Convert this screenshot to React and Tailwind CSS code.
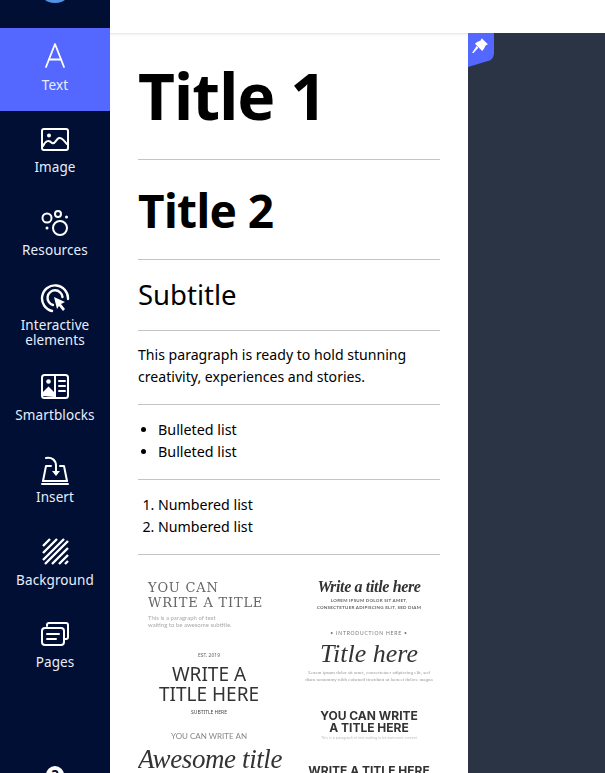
const Svg = ({ children, w = 30, h = 30 }) => (
  <svg width={w} height={h} viewBox="0 0 30 30" fill="none" stroke="white" strokeWidth="2" strokeLinecap="round" strokeLinejoin="round">{children}</svg>
);

const icons = {
  text: <Svg><path d="M6 25 L15 2 L24 25" strokeWidth="1.8" /><path d="M9 17.5 H21" strokeWidth="1.8" /></Svg>,
  image: (
    <Svg>
      <rect x="2" y="4" width="26" height="21" rx="2" />
      <circle cx="9" cy="10.5" r="2" fill="white" stroke="none" />
      <path d="M3 21 C6 15 9 15 12 18 C15 20 16 14 19 13 C22 12 24 16 27 19" />
    </Svg>
  ),
  resources: (
    <Svg>
      <circle cx="7" cy="10" r="4.5" />
      <circle cx="18" cy="6" r="3" />
      <circle cx="20" cy="20" r="7" />
      <circle cx="26.5" cy="9" r="1.5" fill="white" stroke="none" />
      <circle cx="7" cy="20" r="1.5" fill="white" stroke="none" />
    </Svg>
  ),
  interactive: (
    <Svg>
      <path d="M12 27 A13 13 0 1 1 28 15" strokeWidth="2.4" />
      <path d="M13 21 A7.5 7.5 0 1 1 22.5 13" strokeWidth="2.4" />
      <path d="M14 13 L25 18 L21 20 L25 25 L23 27 L19 22 L17 25 Z" fill="white" stroke="none" />
    </Svg>
  ),
  smart: (
    <Svg>
      <rect x="2" y="3" width="26" height="23" rx="2.5" />
      <path d="M15 3 V26" />
      <circle cx="8.5" cy="9.5" r="2.3" fill="white" stroke="none" />
      <path d="M3 24 L3 20 L8.5 14.5 L14 20 L14 25 Z" fill="white" stroke="none" />
      <path d="M19 9 H25 M19 14 H25 M19 19 H25" />
    </Svg>
  ),
  insert: (
    <Svg>
      <path d="M3 26 L6 11 H11 M20 11 H24 L27 26" />
      <path d="M3 26 H27" />
      <path d="M2 29 H28" />
      <path d="M6 3 C12 2 16 5 16 11 V18" />
      <path d="M12 16 H20 L16 21 Z" fill="white" stroke="none" />
    </Svg>
  ),
  background: (
    <Svg>
      <path d="M3 10 L10 3 M3 17 L17 3 M3 24 L24 3 M5 28 L28 5 M12 28 L28 12 M19 28 L28 19 M25 28 L28 25" strokeWidth="2.4" strokeLinecap="butt" />
    </Svg>
  ),
  pages: (
    <Svg>
      <path d="M7 7 V6 C7 4.5 8 4 9 4 H26 C27 4 28 5 28 6 V18 C28 19.5 27 20 26 20 H25" />
      <rect x="2" y="9" width="22" height="17" rx="3" />
      <path d="M7 15 H19 M7 20 H16" />
    </Svg>
  ),
};

const items = [
  { key: "text", label: ["Text"], active: true, cls: "h-[83px] pt-[14px]", lab: "mt-[6px]" },
  { key: "image", label: ["Image"], cls: "h-[82px] pt-[14px]", lab: "mt-[5px]" },
  { key: "resources", label: ["Resources"], cls: "h-[83px] pt-[15px]", lab: "mt-[5px]" },
  { key: "interactive", label: ["Interactive", "elements"], cls: "h-[83px] pt-[8px]", lab: "mt-[4px]" },
  { key: "smart", label: ["Smartblocks"], cls: "h-[82px] pt-[13px]", lab: "mt-[6px]" },
  { key: "insert", label: ["Insert"], cls: "h-[83px] pt-[14px]", lab: "mt-[5px]" },
  { key: "background", label: ["Background"], cls: "h-[82px] pt-[12px]", lab: "mt-[7px]" },
  { key: "pages", label: ["Pages"], cls: "h-[82px] pt-[13px]", lab: "mt-[6px]" },
];

const Sidebar = () => (
  <aside className="w-[110px] h-[773px] shrink-0 bg-[#000f33] overflow-hidden flex flex-col items-stretch text-[#e8eefc]">
    <div className="self-center w-[36px] h-[36px] rounded-full bg-[#4f94e6] -mt-[33px] mb-[25px] shrink-0" />
    {items.map((it) => (
      <div key={it.key} className={`${it.cls} shrink-0 flex flex-col items-center ${it.active ? "bg-[#5468ff]" : ""}`}>
        <div className="h-[30px] flex items-center justify-center">{icons[it.key]}</div>
        <div className={`${it.lab} text-center text-[13.5px] leading-[15px] tracking-[0.1px]`}>
          {it.label.map((l) => <div key={l}>{l}</div>)}
        </div>
      </div>
    ))}
    <div className="self-center mt-[78px] w-[18px] h-[18px] rounded-full bg-white text-[#000f33] text-[14px] font-bold leading-[18px] text-center shrink-0">?</div>
  </aside>
);

const Hr = () => <div className="h-px bg-[#c4c4c4]" />;

const Thumbs = () => (
  <div className="grid grid-cols-2 gap-x-[18px] overflow-hidden h-[218px] blur-[0.4px] text-[#333]">
    <div className="flex flex-col">
      <div className="pl-[10px] pt-[25px] h-[95px] shrink-0" style={{ fontFamily: '"DejaVu Serif", serif' }}>
        <div className="text-[13px] leading-[15px] text-[#666] tracking-[0.8px] whitespace-nowrap">YOU CAN</div>
        <div className="text-[13px] leading-[15px] text-[#666] tracking-[0.8px] whitespace-nowrap">WRITE A TITLE</div>
        <div className="mt-[4px] text-[6px] leading-[7px] text-[#aaa] font-['Lato',sans-serif] whitespace-nowrap">This is a paragraph of text<br />waiting to be awesome subtitle.</div>
      </div>
      <div className="text-center h-[81px] shrink-0 pt-[2px] font-['Noto_Sans',sans-serif]">
        <div className="text-[5px] leading-[6px] text-[#666]">EST. 2019</div>
        <div className="text-[19px] leading-[20px] mt-[6px] text-[#333]">WRITE A<br />TITLE HERE</div>
        <div className="text-[5px] leading-[8px] mt-[4px] text-[#444]">SUBTITLE HERE</div>
      </div>
      <div className="text-center">
        <div className="text-[8px] leading-[10px] text-[#888] font-['Lato',sans-serif]">YOU CAN WRITE AN</div>
        <div className="mt-[2px] text-[27px] leading-[32px] tracking-[-0.4px] italic text-[#333] whitespace-nowrap font-['Liberation_Serif',serif]">Awesome title</div>
      </div>
    </div>
    <div className="flex flex-col">
      <div className="text-center h-[75px] shrink-0 pt-[22px]">
        <div className="text-[16px] leading-[20px] tracking-[-0.35px] italic font-bold text-[#333] font-['Liberation_Serif',serif]">Write a title here</div>
        <div className="text-[4.5px] leading-[7px] tracking-[0.25px] text-[#666] font-['Lato',sans-serif] font-bold whitespace-nowrap">LOREM IPSUM DOLOR SIT AMET,<br />CONSECTETUER ADIPISCING ELIT, SED DIAM</div>
      </div>
      <div className="text-center h-[80px] shrink-0">
        <div className="text-[5px] leading-[6px] tracking-[0.8px] text-[#777] font-['Lato',sans-serif]">• INTRODUCTION HERE •</div>
        <div className="mt-[3px] text-[26px] leading-[30px] italic text-[#333] font-['Liberation_Serif',serif]">Title here</div>
        <div className="text-[5px] leading-[7px] text-[#999] whitespace-nowrap font-['Liberation_Serif',serif]">Lorem ipsum dolor sit amet, consectetuer adipiscing elit, sed<br />diam nonummy nibh euismod tincidunt ut laoreet dolore magna</div>
      </div>
      <div className="text-center h-[55px] shrink-0 font-['Inter',sans-serif] font-bold">
        <div className="text-[12px] leading-[12px] text-[#333]">YOU CAN WRITE<br />A TITLE HERE</div>
        <div className="text-[3.5px] leading-[8px] font-normal text-[#bbb]">This is a paragraph of text waiting to be awesome content</div>
      </div>
      <div className="text-center text-[12px] leading-[12px] font-['Inter',sans-serif] font-bold text-[#333] whitespace-nowrap">WRITE A TITLE HERE</div>
    </div>
  </div>
);

export default function App() {
  return (
    <div className="w-[605px] h-[773px] overflow-hidden flex bg-[#2b3445] font-['Noto_Sans',sans-serif]">
      <Sidebar />
      <div className="flex-1 flex flex-col min-w-0">
        <div className="h-[33px] bg-white shrink-0" />
        <div className="flex-1 flex min-h-0">
          <div className="relative w-[358px] bg-white px-[28px] text-black shadow-[inset_0_3px_3px_-2px_rgba(0,0,0,0.12)]">
            <h1 className="text-[64px] leading-[82px] font-bold pt-[22px] h-[126px] tracking-[-0.9px] whitespace-nowrap">Title 1</h1>
            <Hr />
            <h2 className="text-[46px] leading-[60px] font-bold pt-[20px] h-[99px] tracking-[-0.6px]">Title 2</h2>
            <Hr />
            <h3 className="text-[27.5px] leading-[36px] pt-[17px] h-[70px]">Subtitle</h3>
            <Hr />
            <p className="text-[14.1px] leading-[22px] pt-[13px] h-[73px]">This paragraph is ready to hold stunning creativity, experiences and stories.</p>
            <Hr />
            <ul className="list-disc pl-[20px] text-[14.3px] leading-[22px] pt-[14px] h-[74px]">
              <li>Bulleted list</li>
              <li>Bulleted list</li>
            </ul>
            <Hr />
            <ol className="list-decimal pl-[20px] text-[14.2px] leading-[22px] pt-[14px] h-[74px]">
              <li>Numbered list</li>
              <li>Numbered list</li>
            </ol>
            <Hr />
            <Thumbs />
            <div className="absolute top-0 left-full w-[26px] h-[34px] bg-[#5468ff] flex items-start justify-center" style={{ clipPath: "polygon(0 0,100% 0,100% 62%,96% 72%,86% 80%,0 100%)" }}>
              <svg width="18" height="18" viewBox="0 0 16 16" className="mt-[4px] -ml-[3px]" fill="white"><path d="M9.5 1 L15 6.5 L13 7.5 L11.5 10.5 L10 12.5 L3.5 6 L5.5 4.5 L8.5 3 Z" /><path d="M6.5 9.5 L2 14.5 L1 14 L5 8 Z" /></svg>
            </div>
          </div>
          <div className="flex-1" />
        </div>
      </div>
    </div>
  );
}
